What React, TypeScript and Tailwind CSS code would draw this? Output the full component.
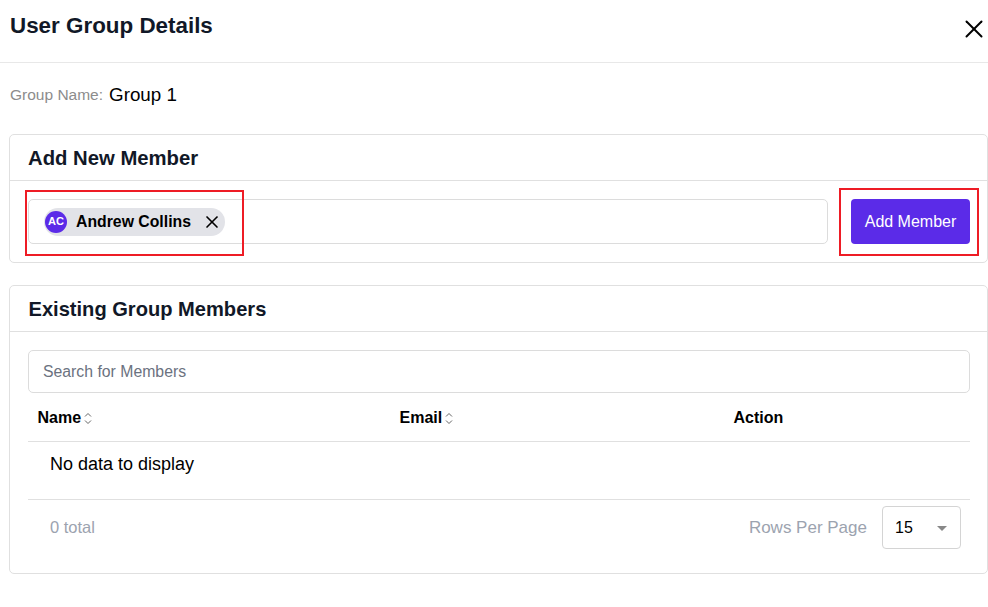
import { X } from "lucide-react";

const SortIcon = () => (
  <svg className="ml-[3px]" width="8" height="13" viewBox="0 0 8 13" fill="none" stroke="#666" strokeWidth="1">
    <path d="M1 4.5 4 1.5l3 3" />
    <path d="M1 8.5l3 3 3-3" />
  </svg>
);

export default function App() {
  return (
    <div className="h-[607px] w-[988px] overflow-hidden bg-white font-['Liberation_Sans',Arial,sans-serif] text-[#111827]">
      <header className="flex h-[63px] items-start justify-between border-b border-[#e8e8e8] pl-[10px]">
        <h1 className="mt-[13px] text-[22.4px] font-bold leading-[26px]">User Group Details</h1>
        <X className="-mr-px mt-[14px] h-[30px] w-[30px] shrink-0 text-black" strokeWidth={1.6} />
      </header>

      <div className="mt-[21px] flex h-[22px] items-center pl-[10px]">
        <span className="text-[15.5px] text-[#8c8c8c]">Group Name:</span>
        <span className="ml-[6px] text-[18.8px] leading-[22px] text-black">Group 1</span>
      </div>

      {/* Add New Member */}
      <section className="ml-[9px] mt-[28px] h-[129px] rounded-[5px] border border-[#e0e0e0]">
        <div className="flex h-[46px] items-center border-b border-[#e0e0e0] pl-[18px] pt-[2px]">
          <h2 className="text-[20.3px] font-bold">Add New Member</h2>
        </div>
        <div className="flex gap-[23px] pl-[18px] pt-[18px]">
          <div className="relative flex h-[45px] w-[800px] items-center rounded-[5px] border border-[#dcdcdc] pl-[15px]">
            <div className="flex h-[28px] w-[181px] items-center rounded-full bg-[#e2e3e8] pl-[1px]">
              <span className="flex h-[22px] w-[22px] shrink-0 items-center justify-center rounded-full bg-[#5b2be8] text-[11px] font-bold text-white">
                AC
              </span>
              <span className="ml-[9px] text-[15.8px] font-bold text-black">Andrew Collins</span>
              <X className="ml-[11px] h-[20px] w-[20px] shrink-0 text-black" strokeWidth={2} />
            </div>
            <div className="absolute -left-[4px] -top-[10px] h-[66px] w-[219px] border-2 border-[#ee1c25]" />
          </div>
          <div className="relative">
            <button className="h-[45px] w-[119px] rounded-[4px] bg-[#5b2be8] text-base text-white">Add Member</button>
            <div className="absolute -left-[12px] -top-[11px] h-[68px] w-[140px] border-2 border-[#ee1c25]" />
          </div>
        </div>
      </section>

      {/* Existing Group Members */}
      <section className="ml-[9px] mt-[22px] h-[289px] rounded-[5px] border border-[#e0e0e0]">
        <div className="flex h-[46px] items-center border-b border-[#e0e0e0] pl-[18.5px] pt-[2px]">
          <h2 className="text-[20.1px] font-bold">Existing Group Members</h2>
        </div>
        <div className="pl-[18px] pr-[17px] pt-[18px]">
          <div className="flex h-[43px] items-center rounded-[5px] border border-[#dcdcdc] pl-[14px] text-[15.8px] text-[#6b7280]">
            Search for Members
          </div>
          <div className="grid h-[49px] grid-cols-[362px_334px_1fr] items-center border-b border-[#e0e0e0] pl-[9.5px] pt-[2px] text-base font-bold text-black">
            <div className="flex items-center">Name<SortIcon /></div>
            <div className="flex items-center">Email<SortIcon /></div>
            <div>Action</div>
          </div>
          <div className="h-[58px] border-b border-[#e0e0e0] pl-[22px] pt-[8px] text-lg text-black">
            No data to display
          </div>
          <div className="flex items-start justify-between pl-[22px] pr-[9px] pt-[6px]">
            <span className="mt-[9px] text-[16.5px] text-[#9ca3af]">0 total</span>
            <div className="flex items-center gap-[15px]">
              <span className="text-[17px] text-[#9ca3af]">Rows Per Page</span>
              <div className="flex h-[43px] w-[79px] items-center justify-between rounded-[4px] border border-[#d4d4d4] pl-[12px] pr-[13px] text-base text-black">
                15
                <span className="mt-[2px] h-0 w-0 border-x-[5px] border-t-[5px] border-x-transparent border-t-[#888]" />
              </div>
            </div>
          </div>
        </div>
      </section>
    </div>
  );
}
